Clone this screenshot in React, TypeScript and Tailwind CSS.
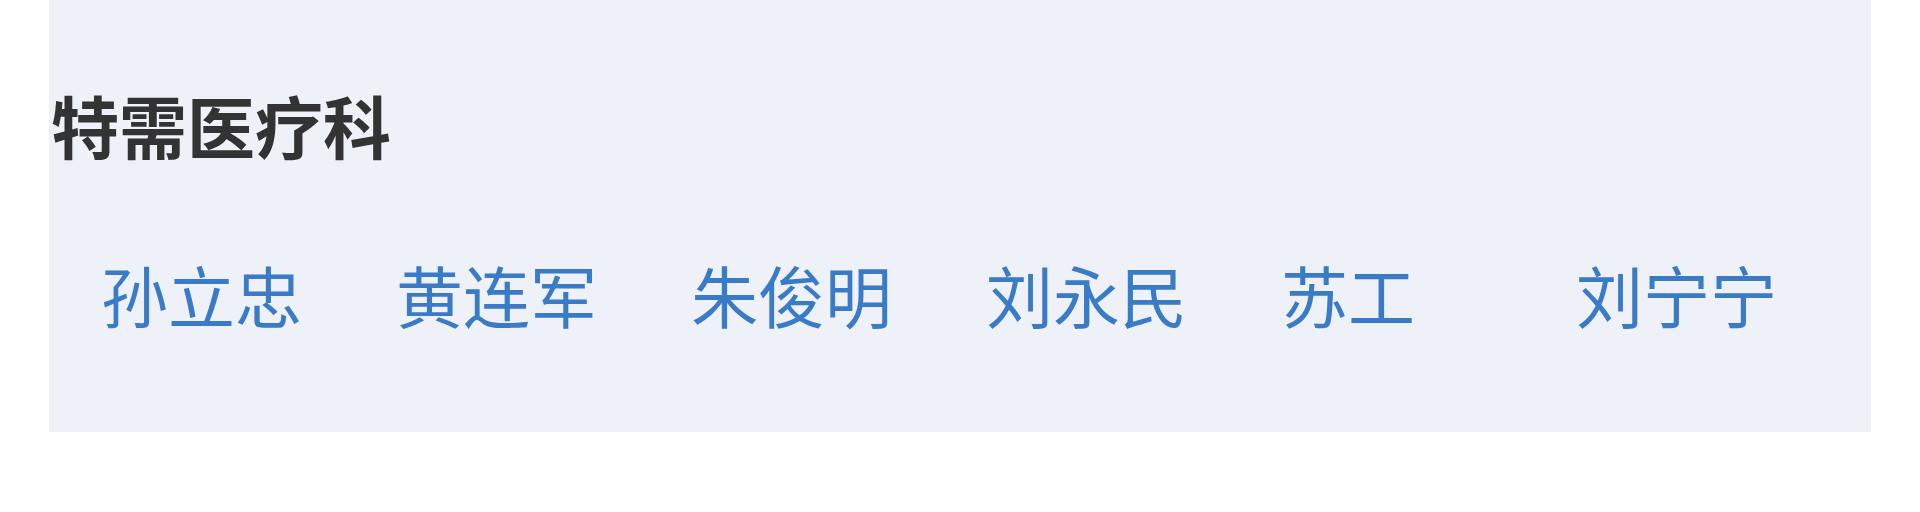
import React from "react";

const names = ["孙立忠", "黄连军", "朱俊明", "刘永民", "苏工", "刘宁宁"];

export default function App() {
  return (
    <div
      className="w-[1920px] h-[512px] bg-white"
      style={{ fontFamily: '"Noto Sans CJK SC", "Noto Sans", sans-serif' }}
    >
      <div className="ml-[49px] w-[1822px] h-[432px] bg-[#eef2f8] flex flex-col">
        <h2 className="pt-[91px] pl-[2px] text-[68px] leading-[1] font-bold text-[#333333]">
          特需医疗科
        </h2>
        <div className="mt-[101px] pl-[52px] grid grid-cols-[repeat(6,295px)]">
          {names.map((n) => (
            <div key={n} className="text-[67px] leading-[1] text-[#3a7bc8] font-normal">
              {n}
            </div>
          ))}
        </div>
      </div>
    </div>
  );
}
